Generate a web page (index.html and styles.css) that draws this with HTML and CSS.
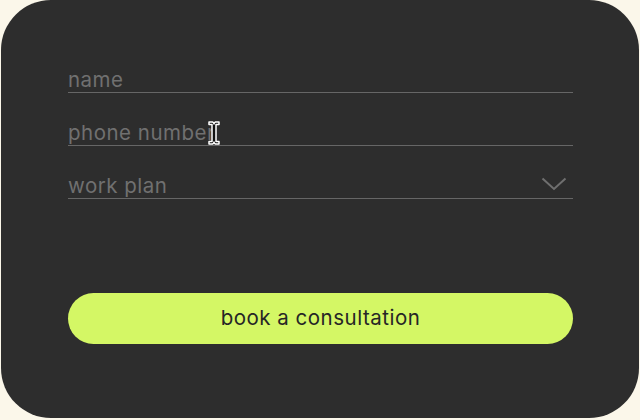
FILE: index.html
```html
<!DOCTYPE html>
<html>
<head>
<meta charset="utf-8">
<link rel="stylesheet" href="styles.css">
</head>
<body>
<div class="card">
  <form class="form">
    <div class="field"><span class="placeholder">name</span></div>
    <div class="field"><span class="placeholder">phone number</span></div>
    <div class="field select">
      <span class="placeholder">work plan</span>
      <svg class="chevron" width="26" height="14" viewBox="0 0 26 14"><path d="M1.5 1.5 L13 12 L24.5 1.5" fill="none" stroke="#6f6f6f" stroke-width="2"/></svg>
    </div>
    <button type="button" class="btn">book a consultation</button>
  </form>
  <svg class="cursor" width="14" height="26" viewBox="0 0 14 26">
    <path d="M2 2 H5.5 Q7 2.5 7 4 Q7 2.5 8.5 2 H12 V4.5 H9 V21.5 H12 V24 H8.5 Q7 23.5 7 22 Q7 23.5 5.5 24 H2 V21.5 H5 V4.5 H2 Z" fill="#111" stroke="#fff" stroke-width="1.5" stroke-linejoin="round"/>
  </svg>
</div>
</body>
</html>
```
FILE: styles.css
```css
html, body {
  margin: 0;
  padding: 0;
}
body {
  background: #fbf7ea;
  width: 640px;
  height: 420px;
  overflow: hidden;
  font-family: "Inter", "Liberation Sans", sans-serif;
}
.card {
  position: relative;
  box-sizing: border-box;
  margin-left: 1px;
  width: 638px;
  height: 418px;
  background: #2d2d2d;
  border-radius: 50px;
  padding: 66px 66px 0 67px;
}
.form {
  display: flex;
  flex-direction: column;
}
.field {
  display: flex;
  align-items: flex-end;
  justify-content: space-between;
  height: 26px;
  border-bottom: 1.5px solid #666;
  margin-bottom: 26px;
}
.placeholder {
  color: #707070;
  font-size: 20.5px;
  line-height: 24px;
  padding-bottom: 0;
  letter-spacing: 0.5px;
}
.chevron {
  margin: 0 6px 7px 0;
}
.btn {
  margin-top: 68px;
  height: 51px;
  border: none;
  border-radius: 26px;
  background: #d4f765;
  color: #262626;
  font-family: "Inter", "Liberation Sans", sans-serif;
  font-size: 20.5px;
  letter-spacing: 0.5px;
  padding: 0 0 2px;
  cursor: pointer;
}
.cursor {
  position: absolute;
  left: 206px;
  top: 120px;
}
```
